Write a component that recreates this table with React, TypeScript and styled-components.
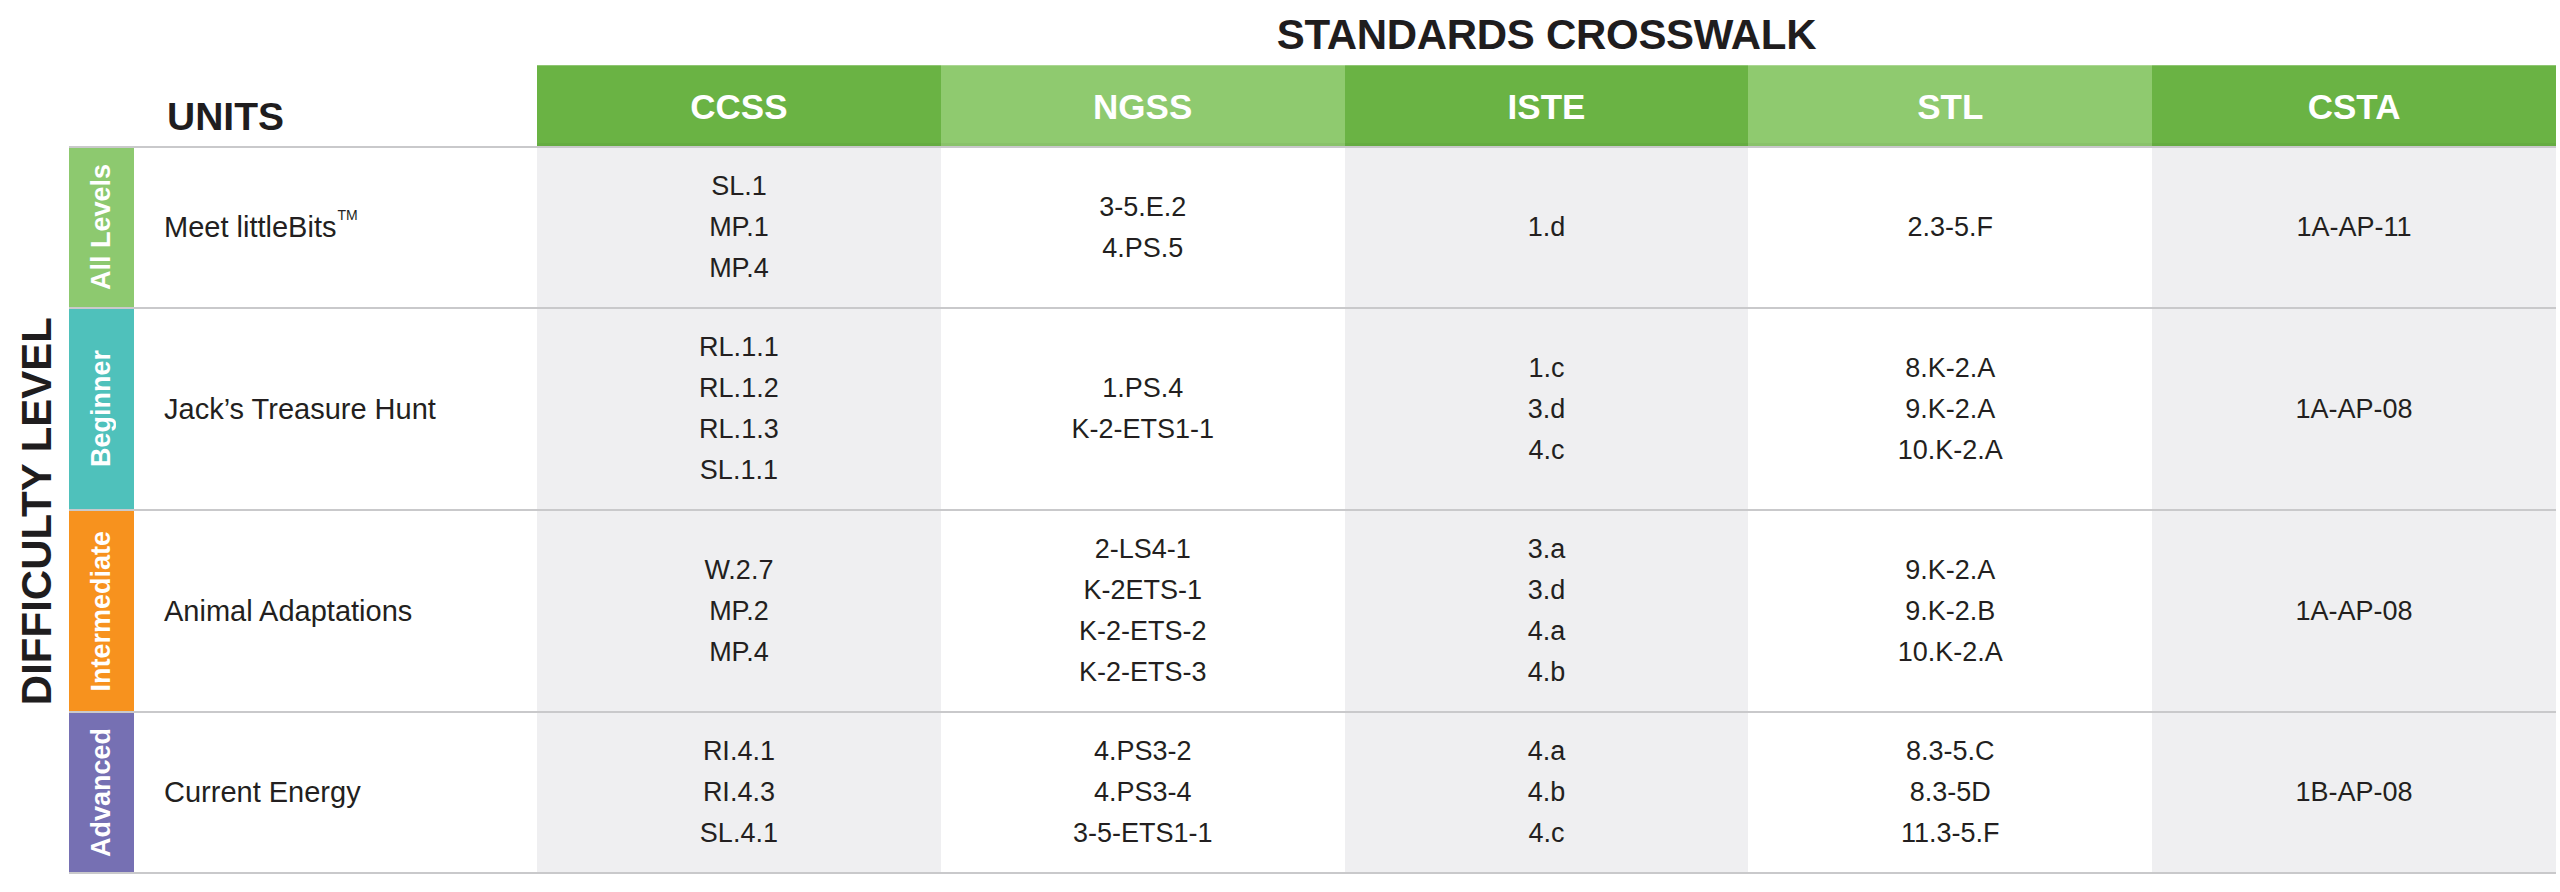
import React from "react";
import styled, { createGlobalStyle } from "styled-components";

const GlobalStyle = createGlobalStyle`
  html, body {
    margin: 0;
    padding: 0;
    background: #ffffff;
  }
  body {
    font-family: "Liberation Sans", Arial, sans-serif;
    color: #231f20;
  }
`;

const DARK_GREEN = "#6ab344";
const LIGHT_GREEN = "#8fca6f";
const CELL_GRAY = "#efeff1";
const LINE = "#c9c9cb";

type Row = {
  level: string;
  color: string;
  unit: string;
  tm?: boolean;
  cells: string[][];
};

const columns = ["CCSS", "NGSS", "ISTE", "STL", "CSTA"];

const rows: Row[] = [
  {
    level: "All Levels",
    color: "#8dc96f",
    unit: "Meet littleBits",
    tm: true,
    cells: [["SL.1", "MP.1", "MP.4"], ["3-5.E.2", "4.PS.5"], ["1.d"], ["2.3-5.F"], ["1A-AP-11"]],
  },
  {
    level: "Beginner",
    color: "#4fc1bb",
    unit: "Jack\u2019s Treasure Hunt",
    cells: [
      ["RL.1.1", "RL.1.2", "RL.1.3", "SL.1.1"],
      ["1.PS.4", "K-2-ETS1-1"],
      ["1.c", "3.d", "4.c"],
      ["8.K-2.A", "9.K-2.A", "10.K-2.A"],
      ["1A-AP-08"],
    ],
  },
  {
    level: "Intermediate",
    color: "#f7921e",
    unit: "Animal Adaptations",
    cells: [
      ["W.2.7", "MP.2", "MP.4"],
      ["2-LS4-1", "K-2ETS-1", "K-2-ETS-2", "K-2-ETS-3"],
      ["3.a", "3.d", "4.a", "4.b"],
      ["9.K-2.A", "9.K-2.B", "10.K-2.A"],
      ["1A-AP-08"],
    ],
  },
  {
    level: "Advanced",
    color: "#7670b3",
    unit: "Current Energy",
    cells: [
      ["RI.4.1", "RI.4.3", "SL.4.1"],
      ["4.PS3-2", "4.PS3-4", "3-5-ETS1-1"],
      ["4.a", "4.b", "4.c"],
      ["8.3-5.C", "8.3-5D", "11.3-5.F"],
      ["1B-AP-08"],
    ],
  },
];

const Page = styled.div`
  width: 2556px;
  display: flex;
  flex-direction: column;
`;

const TitleRow = styled.div`
  height: 65px;
  box-sizing: border-box;
  padding-left: 537px;
  padding-top: 14px;
  display: flex;
  justify-content: center;
`;

const Title = styled.h1`
  margin: 0;
  flex: 1;
  text-align: center;
  font-size: 42px;
  line-height: 42px;
  font-weight: 700;
  color: #1f1d1e;
  letter-spacing: -0.3px;
`;

const HeaderRow = styled.div`
  display: flex;
`;

const SideSpacer = styled.div`
  width: 69px;
  flex: none;
`;

const HeaderGrid = styled.div`
  flex: 1;
  display: grid;
  grid-template-columns: 65px 403px repeat(5, 1fr);
  border-bottom: 2px solid ${LINE};
`;

const UnitsHeading = styled.div`
  grid-column: span 2;
  display: flex;
  align-items: flex-end;
  padding-left: 98px;
  padding-bottom: 10px;
  font-size: 39px;
  line-height: 39px;
  font-weight: 700;
  color: #1f1d1e;
`;

const StandardHeading = styled.div<{ $light: boolean }>`
  height: 81px;
  display: flex;
  align-items: center;
  justify-content: center;
  background: ${(p) => (p.$light ? LIGHT_GREEN : DARK_GREEN)};
  box-shadow: inset 0 1px 0 rgba(255, 255, 255, 0.25), inset 0 -3px 0 rgba(0, 0, 0, 0.04);
  color: #ffffff;
  font-size: 35px;
  font-weight: 700;
  padding-top: 2px;
  box-sizing: border-box;
`;

const Body = styled.div`
  display: flex;
`;

const SideLabelColumn = styled.div`
  width: 69px;
  flex: none;
  display: flex;
  align-items: center;
  justify-content: center;
  padding-left: 4px;
  box-sizing: border-box;
`;

const SideLabel = styled.div`
  writing-mode: vertical-rl;
  transform: rotate(180deg);
  font-size: 42px;
  line-height: 42px;
  font-weight: 700;
  color: #1f1d1e;
  white-space: nowrap;
`;

const Rows = styled.div`
  flex: 1;
  display: flex;
  flex-direction: column;
`;

const RowGrid = styled.div`
  display: grid;
  grid-template-columns: 65px 403px repeat(5, 1fr);
  border-bottom: 2px solid ${LINE};
`;

const LevelBar = styled.div<{ $color: string }>`
  background: ${(p) => p.$color};
  display: flex;
  align-items: center;
  justify-content: center;
`;

const LevelText = styled.span`
  writing-mode: vertical-rl;
  transform: rotate(180deg);
  color: #ffffff;
  font-size: 27px;
  line-height: 27px;
  font-weight: 700;
  white-space: nowrap;
`;

const UnitCell = styled.div`
  display: flex;
  align-items: center;
  padding-left: 30px;
  font-size: 29px;
  color: #231f20;
`;

const TM = styled.sup`
  font-size: 14px;
  vertical-align: top;
  position: relative;
  top: -4px;
  margin-left: 1px;
`;

const StandardCell = styled.div<{ $gray: boolean }>`
  background: ${(p) => (p.$gray ? CELL_GRAY : "#ffffff")};
  display: flex;
  flex-direction: column;
  align-items: center;
  justify-content: center;
  padding: 18px 0;
  font-size: 27px;
  line-height: 41px;
  color: #231f20;
`;

const Code = styled.span`
  display: block;
  white-space: nowrap;
`;

export default function App() {
  return (
    <>
      <GlobalStyle />
      <Page>
        <TitleRow>
          <Title>STANDARDS CROSSWALK</Title>
        </TitleRow>
        <HeaderRow>
          <SideSpacer />
          <HeaderGrid>
            <UnitsHeading>UNITS</UnitsHeading>
            {columns.map((c, i) => (
              <StandardHeading key={c} $light={i % 2 === 1}>
                {c}
              </StandardHeading>
            ))}
          </HeaderGrid>
        </HeaderRow>
        <Body>
          <SideLabelColumn>
            <SideLabel>DIFFICULTY LEVEL</SideLabel>
          </SideLabelColumn>
          <Rows>
            {rows.map((r) => (
              <RowGrid key={r.unit}>
                <LevelBar $color={r.color}>
                  <LevelText>{r.level}</LevelText>
                </LevelBar>
                <UnitCell>
                  <span>
                    {r.unit}
                    {r.tm && <TM>TM</TM>}
                  </span>
                </UnitCell>
                {r.cells.map((cell, i) => (
                  <StandardCell key={i} $gray={i % 2 === 0}>
                    {cell.map((code) => (
                      <Code key={code}>{code}</Code>
                    ))}
                  </StandardCell>
                ))}
              </RowGrid>
            ))}
          </Rows>
        </Body>
      </Page>
    </>
  );
}
